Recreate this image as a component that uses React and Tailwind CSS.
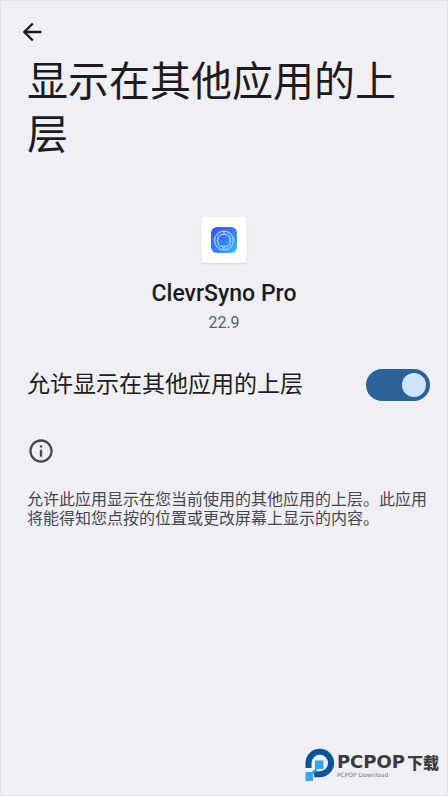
import { useState } from 'react';

const BackIcon = () => (
  <svg viewBox="0 0 24 24" className="w-7 h-7" fill="currentColor" aria-hidden="true">
    <path d="M20 11H7.83l5.59-5.59L12 4l-8 8 8 8 1.41-1.41L7.83 13H20v-2z" />
  </svg>
);

const InfoIcon = () => (
  <svg viewBox="0 0 24 24" className="w-7 h-7" fill="currentColor" aria-hidden="true">
    <path d="M11 7h2v2h-2zm0 4h2v6h-2zm1-9C6.48 2 2 6.48 2 12s4.48 10 10 10 10-4.48 10-10S17.52 2 12 2zm0 18c-4.41 0-8-3.59-8-8s3.59-8 8-8 8 3.59 8 8-3.59 8-8 8z" />
  </svg>
);

const AppLogo = () => (
  <svg viewBox="0 0 26 26" className="w-[26px] h-[26px]" fill="none" aria-hidden="true">
    <defs>
      <linearGradient id="app-logo" x1="3" y1="2" x2="24" y2="25" gradientUnits="userSpaceOnUse">
        <stop offset="0" stopColor="#4357ff" />
        <stop offset="0.5" stopColor="#347dfb" />
        <stop offset="1" stopColor="#35b8ff" />
      </linearGradient>
    </defs>
    <rect width="26" height="26" rx="6" fill="url(#app-logo)" />
    <circle cx="13" cy="13.5" r="9.4" stroke="#b4d8ff" strokeWidth="1.1" />
    <circle cx="13" cy="13.5" r="6.5" stroke="#b4d8ff" strokeWidth="1.2" />
    <path d="M13 4.3v4M13 18.7v4" stroke="#b4d8ff" strokeWidth="0.9" />
  </svg>
);

const PcpopMark = () => (
  <svg viewBox="0 0 30 34" className="w-[30px] h-[34px] shrink-0" aria-hidden="true">
    <path
      d="M0.5 20V15a14.3 14.3 0 1 1 14.3 14.3H9V23.3h5.8A8.3 8.3 0 1 0 6.5 15v5z"
      fill="#07549b"
    />
    <path d="M10 12.5h8.500v8.500h-5.500l-5 5v7H0.500v-9h6l3.500-3z" fill="#38a5e6" />
  </svg>
);

const App = () => {
  const [allowed, setAllowed] = useState(true);

  return (
    <div className="min-h-screen flex flex-col bg-[#f0eff5] border border-[#e3e3e5] text-[#1b1c1e] font-[Roboto,'Noto_Sans_CJK_SC',sans-serif]">
      {/* Header */}
      <header className="pt-[17px]">
        <button type="button" aria-label="返回" className="block ml-[17px]">
          <BackIcon />
        </button>
        <h1 className="mt-2.5 pl-[26px] pr-7 text-[41px] leading-[53px]">显示在其他应用的上层</h1>
      </header>

      <main className="grow">
        {/* App summary */}
        <section className="mt-[55px] flex flex-col items-center">
          <div className="w-[46px] h-[46px] flex items-center justify-center bg-white rounded shadow-sm">
            <AppLogo />
          </div>
          <h2 className="mt-[17px] text-[23px] leading-7 font-medium">ClevrSyno Pro</h2>
          <p className="mt-[3px] text-base leading-6 text-[#5b5d62]">22.9</p>
        </section>

        {/* Permission switch */}
        <label className="mt-[34px] pl-[26px] pr-[17px] flex items-center justify-between cursor-pointer">
          <span className="text-[23px] leading-8">允许显示在其他应用的上层</span>
          <input
            type="checkbox"
            role="switch"
            checked={allowed}
            onChange={(e) => setAllowed(e.target.checked)}
            className="appearance-none w-16 h-8 p-1 flex items-center shrink-0 rounded-full bg-[#8b9199] checked:bg-[#2d6298] checked:justify-end cursor-pointer before:content-[''] before:w-6 before:h-6 before:rounded-full before:bg-[#d1e4ff]"
          />
        </label>

        {/* Explanation */}
        <section className="mt-9 pl-[26px] pr-4 text-[#45484d]">
          <InfoIcon />
          <p className="mt-[25px] text-base leading-[19px]">
            允许此应用显示在您当前使用的其他应用的上层。此应用将能得知您点按的位置或更改屏幕上显示的内容。
          </p>
        </section>
      </main>

      <footer className="flex justify-end items-center gap-0.5 pr-2 pb-[13px]">
        <PcpopMark />
        <div className="whitespace-nowrap text-[#3c3c3e]">
          <div className="flex items-center gap-0.5 leading-5 font-bold font-['DejaVu_Sans','Noto_Sans_CJK_SC',sans-serif]">
            <span className="text-[18px] leading-5">PCPOP</span>
            <span className="text-base leading-5 font-black font-['Noto_Sans_CJK_SC',sans-serif]">下载</span>
          </div>
          <div className="text-[6px] leading-[6px] text-[#77777b] font-['DejaVu_Sans',sans-serif]">PCPOP Download</div>
        </div>
      </footer>
    </div>
  );
};

export default App;
